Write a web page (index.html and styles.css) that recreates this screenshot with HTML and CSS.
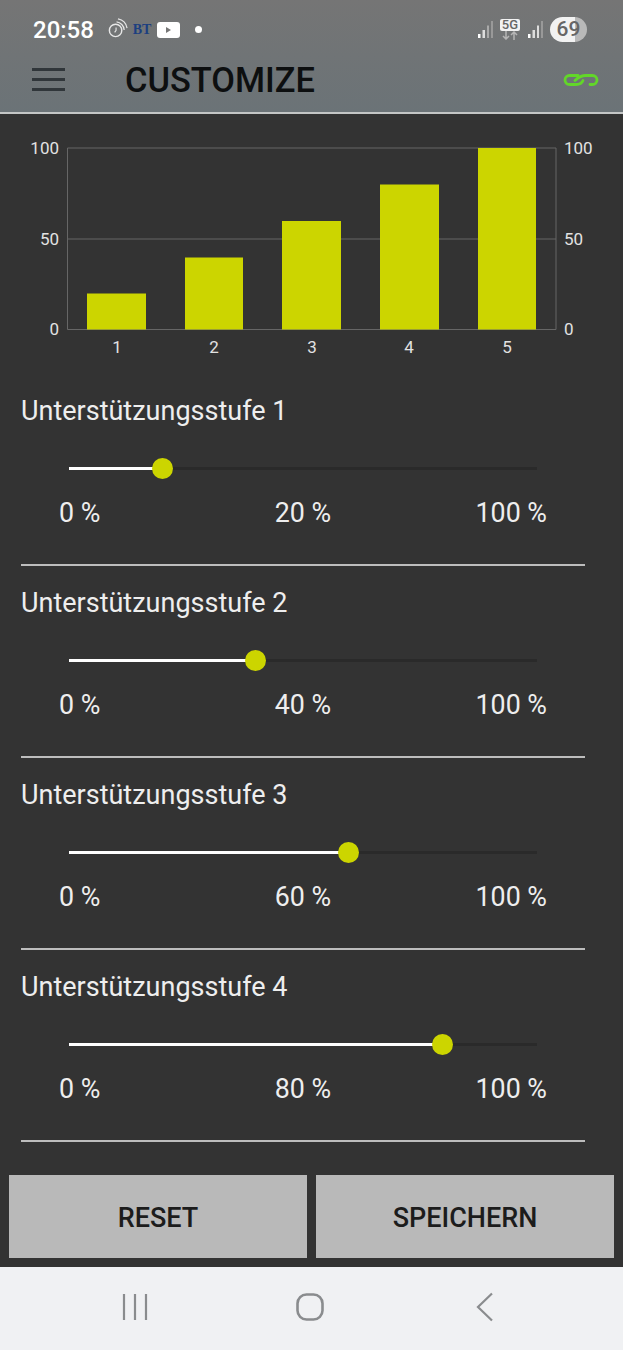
FILE: index.html
```html
<!DOCTYPE html>
<html lang="de">
<head>
  <meta charset="UTF-8">
  <meta name="viewport" content="width=device-width, initial-scale=1.0">
  <title>Customize</title>
  <link rel="stylesheet" href="styles.css">
</head>
<body>

<div class="top">
  <div class="statusbar">
    <span class="time">20:58</span>
    <svg class="icon-alarm" width="21" height="21" viewBox="0 0 22 22" fill="none" stroke="#e6e6e6">
      <circle cx="9" cy="13" r="6.500" stroke-width="1.500"/>
      <path d="M9.500 10v3l-1.500 2" stroke-width="1.200"/>
      <path d="M10 4a9 9 0 0 1 8 8.500M11.500 1a12 12 0 0 1 9.500 9.500" stroke-width="1.300"/>
    </svg>
    <span class="bt">BT</span>
    <svg class="icon-play" width="23" height="16" viewBox="0 0 23 16">
      <rect width="23" height="16" rx="3" fill="#fff"/>
      <path d="M9 5l5 3-5 3z" fill="#777"/>
    </svg>
    <span class="dot"></span>
    <span class="spacer"></span>
    <svg class="icon-signal" width="15" height="17" viewBox="0 0 15 17">
      <rect x="0" y="13" width="2.500" height="4" fill="#fff"/>
      <rect x="4.500" y="9" width="2.500" height="8" fill="#ddd"/>
      <rect x="9" y="4.500" width="2" height="12.500" fill="#aaa"/>
      <rect x="13" y="0" width="2" height="17" fill="#999"/>
    </svg>
    <span class="net">
      <span class="net-label">5G</span>
      <svg width="18" height="9" viewBox="0 0 18 9" fill="none" stroke="#b5b5b5" stroke-width="1.500">
        <path d="M5 0v8M2 5l3 3 3-3M13 9V1M10 4l3-3 3 3"/>
      </svg>
    </span>
    <svg class="icon-signal" width="15" height="17" viewBox="0 0 15 17">
      <rect x="0" y="13" width="2.500" height="4" fill="#fff"/>
      <rect x="4.500" y="9" width="2.500" height="8" fill="#ddd"/>
      <rect x="9" y="4.500" width="2" height="12.500" fill="#ddd"/>
      <rect x="13" y="0" width="2" height="17" fill="#999"/>
    </svg>
    <span class="battery">69</span>
  </div>
  <div class="appbar">
    <svg class="icon-menu" width="34" height="23" viewBox="0 0 34 23" fill="#30363a">
      <rect y="0" width="33" height="3"/>
      <rect y="10" width="33" height="3"/>
      <rect y="20" width="33" height="3"/>
    </svg>
    <h1 class="title">CUSTOMIZE</h1>
    <svg class="icon-link" width="36" height="14" viewBox="0 0 36 14" fill="none" stroke="#62d629" stroke-width="2.800" stroke-linecap="round">
      <path d="M12 11.500H6.500a4.500 4.500 0 0 1 0-9H15"/>
      <path d="M23 2.500h6.500a4.500 4.500 0 0 1 0 9H27"/>
      <path d="M12 7.500c3-3 7-5 11-5M13 11.500c3 0 6-1.500 7-4"/>
    </svg>
  </div>
</div>

<div class="content">
  <svg class="chart" width="623" height="250" viewBox="0 0 623 250">
    <g class="grid">
      <path d="M67.500 31H556V212.500H67.500z"/>
      <path d="M67.500 122H556"/>
    </g>
    <g class="bars">
      <rect x="87" y="176.500" width="59" height="36"/>
      <rect x="185" y="140.500" width="58" height="72"/>
      <rect x="282" y="104" width="59" height="108.500"/>
      <rect x="380" y="67.500" width="59" height="145"/>
      <rect x="478" y="31" width="58" height="181.500"/>
    </g>
    <g class="axis-left">
      <text x="59" y="36.500">100</text>
      <text x="59" y="127.500">50</text>
      <text x="59" y="218">0</text>
    </g>
    <g class="axis-right">
      <text x="564" y="36.500">100</text>
      <text x="564" y="127.500">50</text>
      <text x="564" y="218">0</text>
    </g>
    <g class="axis-bottom">
      <text x="117" y="236">1</text>
      <text x="214" y="236">2</text>
      <text x="312" y="236">3</text>
      <text x="409" y="236">4</text>
      <text x="507" y="236">5</text>
    </g>
  </svg>

  <section class="level">
    <h2 class="level-title">Unterstützungsstufe 1</h2>
    <div class="slider">
      <div class="slider-fill" style="width: 94px"></div>
      <div class="slider-thumb"></div>
    </div>
    <div class="values"><span>0 %</span><span>20 %</span><span>100 %</span></div>
  </section>

  <section class="level">
    <h2 class="level-title">Unterstützungsstufe 2</h2>
    <div class="slider">
      <div class="slider-fill" style="width: 187px"></div>
      <div class="slider-thumb"></div>
    </div>
    <div class="values"><span>0 %</span><span>40 %</span><span>100 %</span></div>
  </section>

  <section class="level">
    <h2 class="level-title">Unterstützungsstufe 3</h2>
    <div class="slider">
      <div class="slider-fill" style="width: 280px"></div>
      <div class="slider-thumb"></div>
    </div>
    <div class="values"><span>0 %</span><span>60 %</span><span>100 %</span></div>
  </section>

  <section class="level">
    <h2 class="level-title">Unterstützungsstufe 4</h2>
    <div class="slider">
      <div class="slider-fill" style="width: 374px"></div>
      <div class="slider-thumb"></div>
    </div>
    <div class="values"><span>0 %</span><span>80 %</span><span>100 %</span></div>
  </section>

  <div class="actions">
    <button class="btn">RESET</button>
    <button class="btn">SPEICHERN</button>
  </div>
</div>

<div class="navbar">
  <svg width="28" height="28" viewBox="0 0 28 28" fill="none" stroke="#8a8c8e" stroke-width="2.200">
    <path d="M3 1v26M14 1v26M25 1v26"/>
  </svg>
  <svg width="28" height="28" viewBox="0 0 28 28" fill="none" stroke="#8a8c8e" stroke-width="2.600">
    <rect x="1.500" y="1.500" width="25" height="25" rx="9"/>
  </svg>
  <svg class="nav-back" width="18" height="30" viewBox="0 0 18 30" fill="none" stroke="#8a8c8e" stroke-width="2.200">
    <path d="M16 1.500L2 15l14 13.500"/>
  </svg>
</div>

</body>
</html>
```

FILE: styles.css
```css
* {
  box-sizing: border-box;
}
body {
  margin: 0;
  width: 623px;
  height: 1350px;
  display: flex;
  flex-direction: column;
  overflow: hidden;
  font-family: Roboto, sans-serif;
  background-color: #333;
}
.top {
  height: 114px;
  background: linear-gradient(#757575, #6b7377);
  border-bottom: 2px solid #c4c6c6;
}
.statusbar {
  height: 57px;
  padding: 2px 36px 0 33px;
  display: flex;
  align-items: center;
  color: #fff;
}
.time {
  font-size: 24px;
  font-weight: 500;
  width: 74px;
}
.icon-alarm {
  margin-top: -3px;
}
.bt {
  font-family: "Liberation Serif", serif;
  font-weight: 700;
  font-size: 14px;
  color: #1c3f80;
  margin-left: 4px;
  width: 20px;
  text-align: center;
}
.icon-play {
  margin-left: 5px;
}
.dot {
  width: 7px;
  height: 7px;
  border-radius: 50%;
  background-color: #fff;
  margin-left: 15px;
}
.spacer {
  flex: 1;
}
.net {
  display: flex;
  flex-direction: column;
  align-items: center;
  margin: 0 8px 0 7px;
}
.net-label {
  background-color: #f2f2f2;
  color: #666;
  font-size: 13px;
  font-weight: 500;
  line-height: 12px;
  padding: 0 2px;
  border-radius: 2px;
}
.battery {
  width: 37px;
  height: 25px;
  margin-left: 7px;
  border-radius: 13px;
  background: linear-gradient(90deg, #f2f2f2 68%, #b9b9b9 68%);
  color: #666;
  font-size: 21px;
  font-weight: 500;
  line-height: 25px;
  text-align: center;
}
.appbar {
  height: 55px;
  padding: 0 24px 10px 32px;
  display: flex;
  align-items: center;
}
.title {
  flex: 1;
  margin: 0 0 0 59px;
  font-size: 34.400px;
  font-weight: 500;
  color: #0d0f10;
}
.content {
  flex: 1;
}
.chart {
  display: block;
  margin: 3px 0 7px;
}
.grid path {
  fill: none;
  stroke: #666;
  stroke-width: 1;
}
.bars rect {
  fill: #ccd500;
}
.chart text {
  font-family: Roboto, sans-serif;
  font-size: 17px;
  fill: #e2e2e2;
}
.axis-left text {
  text-anchor: end;
}
.axis-bottom text {
  text-anchor: middle;
}
.level {
  height: 192px;
  margin: 0 38px 0 21px;
  padding-top: 22px;
  border-bottom: 2px solid #bdbdbd;
}
.level-title {
  margin: 0;
  font-size: 27px;
  font-weight: 400;
  line-height: 30px;
  color: #eee;
}
.slider {
  margin: 41px 48px 0;
  height: 3px;
  background-color: #2a2a2a;
  display: flex;
  align-items: center;
}
.slider-fill {
  height: 3px;
  background-color: #fff;
}
.slider-thumb {
  width: 21px;
  height: 21px;
  margin-left: -11px;
  flex-shrink: 0;
  border-radius: 50%;
  background-color: #ccd500;
}
.values {
  display: grid;
  grid-template-columns: 1fr auto 1fr;
  margin: 28px 38px 0;
  font-size: 26.800px;
  line-height: 30px;
  color: #eee;
}
.values span:last-child {
  justify-self: end;
}
.actions {
  display: grid;
  grid-template-columns: 298px 298px;
  justify-content: space-between;
  padding: 33px 9px 0;
}
.btn {
  height: 83px;
  padding-top: 3px;
  border: none;
  border-radius: 0;
  background-color: #b9b9b9;
  color: #1c1c1c;
  font-family: Roboto, sans-serif;
  font-size: 27px;
  font-weight: 500;
}
.navbar {
  height: 83px;
  padding: 0 0 4px 121px;
  background-color: #f0f1f3;
  display: flex;
  align-items: center;
  gap: 147px;
}
.nav-back {
  margin-left: 5px;
}
```
